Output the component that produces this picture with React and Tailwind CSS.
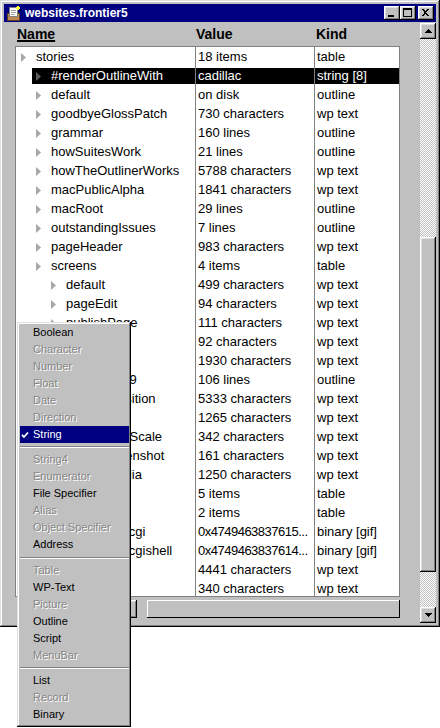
import React from "react";

const rows = [
  { n: "stories", v: "18 items", k: "table", l: 0 },
  { n: "#renderOutlineWith", v: "cadillac", k: "string [8]", l: 1, sel: true },
  { n: "default", v: "on disk", k: "outline", l: 1 },
  { n: "goodbyeGlossPatch", v: "730 characters", k: "wp text", l: 1 },
  { n: "grammar", v: "160 lines", k: "outline", l: 1 },
  { n: "howSuitesWork", v: "21 lines", k: "outline", l: 1 },
  { n: "howTheOutlinerWorks", v: "5788 characters", k: "wp text", l: 1 },
  { n: "macPublicAlpha", v: "1841 characters", k: "wp text", l: 1 },
  { n: "macRoot", v: "29 lines", k: "outline", l: 1 },
  { n: "outstandingIssues", v: "7 lines", k: "outline", l: 1 },
  { n: "pageHeader", v: "983 characters", k: "wp text", l: 1 },
  { n: "screens", v: "4 items", k: "table", l: 1 },
  { n: "default", v: "499 characters", k: "wp text", l: 2 },
  { n: "pageEdit", v: "94 characters", k: "wp text", l: 2 },
  { n: "publishPage", v: "111 characters", k: "wp text", l: 2 },
  { n: "search", v: "92 characters", k: "wp text", l: 2 },
  { n: "siteMap", v: "1930 characters", k: "wp text", l: 2 },
  { n: "archive1999", v: "106 lines", k: "outline", l: 2 },
  { n: "windowPosition", v: "5333 characters", k: "wp text", l: 2 },
  { n: "sidebar", v: "1265 characters", k: "wp text", l: 2 },
  { n: "imageGrayScale", v: "342 characters", k: "wp text", l: 2 },
  { n: "homeScreenshot", v: "161 characters", k: "wp text", l: 2 },
  { n: "encyclopedia", v: "1250 characters", k: "wp text", l: 2 },
  { n: "tools", v: "5 items", k: "table", l: 1 },
  { n: "images", v: "2 items", k: "table", l: 1 },
  { n: "remoteEditcgi", v: "0x4749463837615...", k: "binary [gif]", l: 2, hex: true },
  { n: "remoteEditcgishell", v: "0x4749463837614...", k: "binary [gif]", l: 2, hex: true },
  { n: "support", v: "4441 characters", k: "wp text", l: 1 },
  { n: "welcome", v: "340 characters", k: "wp text", l: 1 },
];

const indent = { 0: "w-[1px]", 1: "w-[16px]", 2: "w-[31px]" };

const menu = [
  ["Boolean", true],
  ["Character", false],
  ["Number", false],
  ["Float", false],
  ["Date", false],
  ["Direction", false],
  ["String", true, true],
  "sep8",
  ["String4", false],
  ["Enumerator", false],
  ["File Specifier", true],
  ["Alias", false],
  ["Object Specifier", false],
  ["Address", true],
  "sep9",
  ["Table", false],
  ["WP-Text", true],
  ["Picture", false],
  ["Outline", true],
  ["Script", true],
  ["MenuBar", false],
  "sep8",
  ["List", true],
  ["Record", false],
  ["Binary", true],
];

const raised =
  "shadow-[inset_-1px_-1px_0_#000,inset_1px_1px_0_#fff,inset_-2px_-2px_0_#808080,inset_2px_2px_0_#dfdfdf]";

function Tri({ sel }) {
  return (
    <svg width="5" height="9" viewBox="0 0 5 9" className="shrink-0">
      <polygon points="0,0 5,4.5 0,9" fill={sel ? "#5a5a5a" : "#a8a8a8"} />
    </svg>
  );
}

function TitleButton({ kind }) {
  return (
    <div className={`w-[16px] h-[14px] bg-[#c0c0c0] ${raised} flex`}>
      <svg width="16" height="14" viewBox="0 0 16 14" shapeRendering="crispEdges">
        {kind === "min" && <rect x="4" y="9" width="6" height="2" fill="#000" />}
        {kind === "max" && (
          <g fill="#000">
            <rect x="3" y="2" width="9" height="2" />
            <rect x="3" y="2" width="1" height="9" />
            <rect x="11" y="2" width="1" height="9" />
            <rect x="3" y="10" width="9" height="1" />
          </g>
        )}
        {kind === "close" && (
          <g fill="#000">
            <path d="M4 3h2l1.5 2 1.5-2h2l-2.5 3.5 2.5 3.5h-2l-1.5-2-1.5 2h-2l2.5-3.5z" />
          </g>
        )}
      </svg>
    </div>
  );
}

function ScrollButton({ up }) {
  return (
    <div className={`w-[16px] h-[16px] bg-[#c0c0c0] ${raised} flex items-center justify-center shrink-0`}>
      <svg width="7" height="4" viewBox="0 0 7 4" shapeRendering="crispEdges">
        {up ? <polygon points="3.5,0 7,4 0,4" fill="#000" /> : <polygon points="0,0 7,0 3.5,4" fill="#000" />}
      </svg>
    </div>
  );
}

const checker =
  "bg-[conic-gradient(#ffffff_25%,#c0c0c0_0_50%,#ffffff_0_75%,#c0c0c0_0)] bg-[length:2px_2px]";

export default function App() {
  return (
    <div className="relative w-[440px] h-[728px] bg-white overflow-hidden [font-family:'Liberation_Sans',Arial,sans-serif] text-black">
      <div className="w-[440px] h-[627px] bg-[#c0c0c0] p-[4px] flex flex-col shadow-[inset_-1px_-1px_0_#000,inset_1px_1px_0_#dfdfdf,inset_-2px_-2px_0_#808080,inset_2px_2px_0_#fff]">
        {/* Title bar */}
        <div className="h-[18px] bg-[#000080] flex items-center shrink-0">
          <svg width="14" height="16" viewBox="0 0 14 16" className="ml-[3px]" shapeRendering="crispEdges">
            <rect x="0.5" y="8.5" width="12" height="7" fill="#c08850" stroke="#604020" />
            <rect x="2.5" y="2.5" width="8" height="9" fill="#fff" stroke="#808080" />
            <path d="M4 5h5M4 7h5M4 9h4" stroke="#a0a0a0" />
            <path d="M11 0l1 2 2 1-2 1-1 2-1-2-2-1 2-1z" fill="#ffff40" />
          </svg>
          <span className="ml-[4px] text-white font-bold text-[12px] leading-[18px]">websites.frontier5</span>
          <div className="ml-auto flex">
            <TitleButton kind="min" />
            <TitleButton kind="max" />
          </div>
          <div className="ml-[2px] mr-[2px]">
            <TitleButton kind="close" />
          </div>
        </div>

        {/* Body */}
        <div className="flex flex-1 min-h-0">
          <div className="flex-1 pl-[11px] flex flex-col">
            {/* Header */}
            <div className="h-[24px] pt-[5px] flex font-bold text-[14px] leading-[14px] shrink-0">
              <div className="w-[181px] pl-[2px]">
                <span className="underline decoration-2 underline-offset-1">Name</span>
              </div>
              <div className="w-[120px]">Value</div>
              <div>Kind</div>
            </div>

            {/* List */}
            <div className="w-[385px] h-[551px] border border-[#808080] bg-white overflow-hidden shrink-0 text-[13px]">
              {rows.map((r, i) => (
                <div key={i} className="flex h-[19px]">
                  <div className="w-[179px] flex items-start overflow-hidden">
                    <div className={`${indent[r.l]} shrink-0`} />
                    <div
                      className={`flex-1 mt-[2px] h-[16px] flex items-center pl-[4px] whitespace-nowrap overflow-hidden ${
                        r.sel ? "bg-black text-white" : ""
                      }`}
                    >
                      <Tri sel={r.sel} />
                      <span className="ml-[10px] leading-[16px]">{r.n}</span>
                    </div>
                  </div>
                  <div className="w-[119px] border-l border-[#808080] flex items-start overflow-hidden">
                    <div
                      className={`flex-1 mt-[2px] h-[16px] pl-[2px] leading-[16px] whitespace-nowrap overflow-hidden ${
                        r.sel ? "bg-black text-white" : ""
                      } ${r.hex ? "tracking-[-0.5px]" : ""}`}
                    >
                      {r.v}
                    </div>
                  </div>
                  <div className="flex-1 border-l border-[#808080] flex items-start overflow-hidden">
                    <div
                      className={`flex-1 mt-[2px] h-[16px] pl-[2px] leading-[16px] whitespace-nowrap overflow-hidden ${
                        r.sel ? "bg-black text-white" : ""
                      }`}
                    >
                      {r.k}
                    </div>
                  </div>
                </div>
              ))}
            </div>

            {/* Bottom bar */}
            <div className="mt-[3px] h-[18px] flex shrink-0">
              <div className={`ml-[85px] w-[37px] h-[18px] bg-[#c0c0c0] ${raised}`} />
              <div className="ml-[10px] w-[253px] h-[18px] bg-[#c0c0c0] shadow-[inset_-1px_-1px_0_#000,inset_1px_1px_0_#fff]" />
            </div>
          </div>

          {/* Scrollbar */}
          <div className="w-[16px] mt-[1px] flex flex-col">
            <ScrollButton up />
            <div className={`h-[198px] shrink-0 ${checker}`} />
            <div className={`h-[335px] shrink-0 bg-[#c0c0c0] ${raised}`} />
            <div className={`flex-1 ${checker}`} />
            <ScrollButton />
          </div>
        </div>
      </div>

      {/* Popup menu */}
      <div
        className={`absolute left-[17px] top-[322px] w-[114px] bg-[#c0c0c0] pt-[2px] pb-[4px] pl-[3px] pr-[2px] text-[11px] shadow-[inset_-1px_-1px_0_#000,inset_1px_1px_0_#dfdfdf,inset_-2px_-2px_0_#808080,inset_2px_2px_0_#fff]`}
      >
        {menu.map((m, i) => {
          if (m === "sep8" || m === "sep9") {
            return (
              <div key={i} className={`${m === "sep8" ? "h-[8px]" : "h-[9px]"} flex flex-col justify-center`}>
                <div className="h-px bg-[#808080]" />
                <div className="h-px bg-white" />
              </div>
            );
          }
          const [label, enabled, sel] = m;
          return (
            <div
              key={i}
              className={`h-[17px] flex items-center ${sel ? "bg-[#000080] text-white" : ""}`}
            >
              <div className="w-[13px] pl-[1px] flex items-center shrink-0">
                {sel && (
                  <svg width="8" height="8" viewBox="0 0 8 8">
                    <polyline points="1,4 3,6 7,1.5" fill="none" stroke="#fff" strokeWidth="1.8" />
                  </svg>
                )}
              </div>
              <span
                className={`leading-[17px] whitespace-nowrap ${
                  enabled ? "" : "text-[#868686] [text-shadow:1px_1px_0_#fff]"
                }`}
              >
                {label}
              </span>
            </div>
          );
        })}
      </div>
    </div>
  );
}
